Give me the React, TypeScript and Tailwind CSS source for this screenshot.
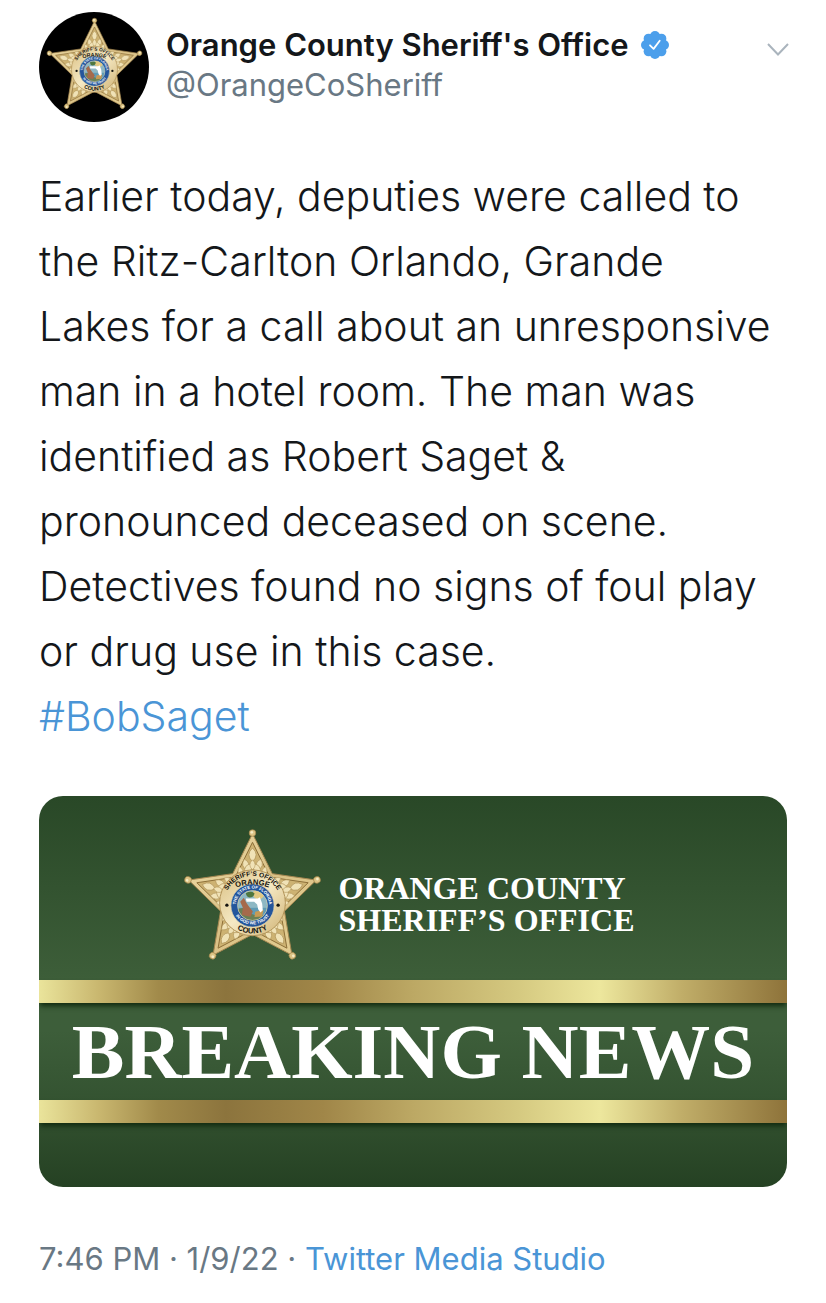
import React from "react";

type Point = [number, number];

const ARM_ANGLES = [0, 72, 144, 216, 288];

function polar(radius: number, degrees: number): Point {
  const a = (degrees * Math.PI) / 180;
  return [Math.sin(a) * radius, -Math.cos(a) * radius];
}

function starPoints(outer: number, inner: number): string {
  return ARM_ANGLES.flatMap((a) => [polar(outer, a), polar(inner, a + 36)])
    .map(([x, y]) => `${x.toFixed(1)},${y.toFixed(1)}`)
    .join(" ");
}

function Leaf({ x, y, r, s = 1 }: { x: number; y: number; r: number; s?: number }) {
  return (
    <path
      d="M0 -18 Q19 -1 0 18 Q-19 -1 0 -18Z"
      transform={`translate(${x} ${y}) rotate(${r}) scale(${s})`}
    />
  );
}

function SheriffStar({ id, className }: { id: string; className: string }) {
  return (
    <svg viewBox="40 40 416 400" className={className} role="img" aria-label="Sheriff star badge">
      <defs>
        <linearGradient id={`${id}-gold`} x1="0" y1="0" x2="1" y2="1">
          <stop offset="0" stopColor="#f0dfaa" />
          <stop offset="0.5" stopColor="#d9c085" />
          <stop offset="1" stopColor="#e6d094" />
        </linearGradient>
        <linearGradient id={`${id}-disc`} x1="0" y1="0" x2="1" y2="1">
          <stop offset="0" stopColor="#d9be80" />
          <stop offset="0.5" stopColor="#f5e9c4" />
          <stop offset="1" stopColor="#cfb273" />
        </linearGradient>
        <path id={`${id}-office`} d="M160 273 A88 89 0 0 1 336 273" />
        <path id={`${id}-orange`} d="M180 227 Q248 193 316 227" />
        <path id={`${id}-county`} d="M182 327 A87 87 0 0 0 314 327" />
        <path id={`${id}-state`} d="M201 289 A50 50 0 1 1 295 289" />
        <path id={`${id}-trust`} d="M190 288 A61 61 0 0 0 306 288" />
        <clipPath id={`${id}-seal`}>
          <circle cx="248" cy="273" r="45" />
        </clipPath>
      </defs>
      <g transform="translate(248 259)">
        <polygon
          points={starPoints(202, 101)}
          fill={`url(#${id}-gold)`}
          stroke="#a58750"
          strokeWidth="3"
          strokeLinejoin="round"
        />
        <polygon points={starPoints(176, 88)} fill="#cdb272" stroke="#8d6f39" strokeWidth="3" />
        {ARM_ANGLES.map((angle) => (
          <g key={angle} transform={`rotate(${angle})`}>
            <g fill="#f0e2b6" stroke="#b2965b" strokeWidth="2">
              <Leaf x={-36} y={-88} r={-12} s={0.8} />
              <Leaf x={36} y={-88} r={12} s={0.8} />
              <Leaf x={-20} y={-108} r={-14} />
              <Leaf x={20} y={-108} r={14} />
              <Leaf x={0} y={-138} r={0} s={1.15} />
              <Leaf x={-13} y={-97} r={36} />
              <Leaf x={13} y={-97} r={-36} />
              <Leaf x={0} y={-108} r={0} s={0.85} />
            </g>
            <circle cx="0" cy="-204" r="10" fill="#dcc485" stroke="#a1834a" strokeWidth="2" />
            <circle cx="-2" cy="-206" r="4" fill="#f6ebc5" />
          </g>
        ))}
      </g>
      <circle cx="248" cy="265" r="99" fill={`url(#${id}-disc)`} stroke="#b3955a" strokeWidth="3" />
      <circle cx="248" cy="273" r="65" fill="#24569c" stroke="#e8dab0" strokeWidth="2" />
      <g clipPath={`url(#${id}-seal)`}>
        <rect x="200" y="222" width="96" height="98" fill="#8eb8c4" />
        <rect x="200" y="280" width="96" height="40" fill="#5f9bb5" />
        <circle cx="266" cy="238" r="17" fill="#e2c982" />
        <path d="M200 287 Q222 272 238 292 T296 298 V325 H200Z" fill="#6a8055" />
        <path d="M211 262 L222 250 L229 264 L239 278 L249 291 L242 307 L216 302 L219 280Z" fill="#a66a4b" />
        <path d="M228 236 Q242 226 254 236 Q252 249 239 249 Q230 247 228 236Z" fill="#4f773e" />
        <path d="M256 292 L281 286 L277 306 L254 308Z" fill="#c79b55" />
        <path
          d="M228 252 L264 252 L270 248 L277 267 L279 287 L272 294 L265 284 L262 270 L253 262 L230 262Z"
          fill="#ffffff"
        />
      </g>
      <circle cx="248" cy="273" r="45" fill="none" stroke="#dfd3a8" strokeWidth="2" />
      <g fill="#ffffff" className="font-['Liberation_Sans'] font-bold text-[13px]" textAnchor="middle">
        <text>
          <textPath href={`#${id}-state`} startOffset="50%">THE STATE OF FLORIDA</textPath>
        </text>
        <text>
          <textPath href={`#${id}-trust`} startOffset="50%">IN GOD WE TRUST</textPath>
        </text>
      </g>
      <g fill="#15140f" className="font-['Liberation_Sans'] font-bold" textAnchor="middle">
        <text className="text-[20px]">
          <textPath href={`#${id}-office`} startOffset="50%">SHERIFF’S OFFICE</textPath>
        </text>
        <text className="text-[23px]">
          <textPath href={`#${id}-orange`} startOffset="50%">ORANGE</textPath>
        </text>
        <text className="text-[23px]">
          <textPath href={`#${id}-county`} startOffset="50%">COUNTY</textPath>
        </text>
      </g>
      <circle cx="171" cy="272" r="5" fill="#15140f" />
      <circle cx="325" cy="272" r="5" fill="#15140f" />
    </svg>
  );
}

function VerifiedBadge() {
  return (
    <svg viewBox="0 0 28 28" className="size-7 shrink-0" role="img" aria-label="Verified account">
      <g fill="#4c9feb">
        <circle cx="14" cy="14" r="11.8" />
        {[0, 45, 90, 135, 180, 225, 270, 315].map((a) => {
          const [x, y] = polar(9, a);
          return <circle key={a} cx={14 + x} cy={14 + y} r="5" />;
        })}
      </g>
      <path
        d="M9 14.3 L12.6 17.9 L18.7 9.8"
        fill="none"
        stroke="#ffffff"
        strokeWidth="1.8"
        strokeLinecap="round"
        strokeLinejoin="round"
      />
    </svg>
  );
}

function GoldBar() {
  return (
    <div className="relative h-[23px] bg-[linear-gradient(90deg,#eae49b_0%,#c9b76f_8%,#a18a4a_16%,#8c743d_25%,#a08648_38%,#bca864_50%,#d5c980_64%,#ede79d_75%,#c0ad68_86%,#8e733a_100%)] shadow-[0_4px_5px_-1px_#122b10]" />
  );
}

function Banner() {
  return (
    <figure className="mt-[47px] overflow-hidden rounded-3xl bg-[linear-gradient(180deg,#294827_0%,#3d5e39_47%,#3d5e3a_60%,#345331_78%,#254123_100%)] text-white">
      <div className="flex h-[184px] items-center justify-center gap-4 pr-2 pt-3">
        <SheriffStar id="banner" className="h-[133px] w-[139px]" />
        <p className="mt-5 font-['Liberation_Serif',serif] text-[32px] font-bold leading-8 whitespace-nowrap">
          ORANGE COUNTY
          <br />
          SHERIFF’S OFFICE
        </p>
      </div>
      <GoldBar />
      <div className="flex h-[97px] items-center justify-center">
        <p className="font-['Liberation_Serif',serif] text-[79px] font-bold leading-none whitespace-nowrap">
          BREAKING NEWS
        </p>
      </div>
      <GoldBar />
      <div className="h-16" />
    </figure>
  );
}

export default function App() {
  return (
    <article className="min-h-screen bg-white px-[39px] pt-3 pb-6 font-['Inter',sans-serif] text-[#14171a]">
      <header className="flex items-start">
        <div className="flex size-[110px] shrink-0 justify-center rounded-full bg-black pt-[5px]">
          <SheriffStar id="avatar" className="h-[93px] w-[97px]" />
        </div>
        <div className="ml-[17px] flex-1 pt-[13px] text-[31px] leading-10">
          <div className="flex items-center gap-3">
            <h1 className="font-semibold whitespace-nowrap">Orange County Sheriff's Office</h1>
            <VerifiedBadge />
          </div>
          <p>
            <a href="#profile" className="text-[#697884]">
              @OrangeCoSheriff
            </a>
          </p>
        </div>
        <button type="button" aria-label="More options" className="-mr-1.5 mt-6 p-1">
          <svg viewBox="0 0 22 18" className="h-[18px] w-[22px]" fill="none" stroke="#aab4bd" strokeWidth="2">
            <path d="M1 4 L11 14.5 L21 4" />
          </svg>
        </button>
      </header>

      <p className="mt-[42px] pr-2 text-[41px] font-light leading-[65px]">
        Earlier today, deputies were called to the Ritz-Carlton Orlando, Grande Lakes for a call about an
        unresponsive man in a hotel room. The man was identified as Robert Saget &amp; pronounced deceased on
        scene. Detectives found no signs of foul play or drug use in this case.
        <br />
        <a href="#BobSaget" className="text-[#4a95d6]">
          #BobSaget
        </a>
      </p>

      <Banner />

      <footer className="mt-[52px] text-[31px] leading-10 text-[#697884]">
        <time>7:46 PM · 1/9/22</time> ·{" "}
        <a href="#source" className="text-[#4a95d6]">
          Twitter Media Studio
        </a>
      </footer>
    </article>
  );
}
